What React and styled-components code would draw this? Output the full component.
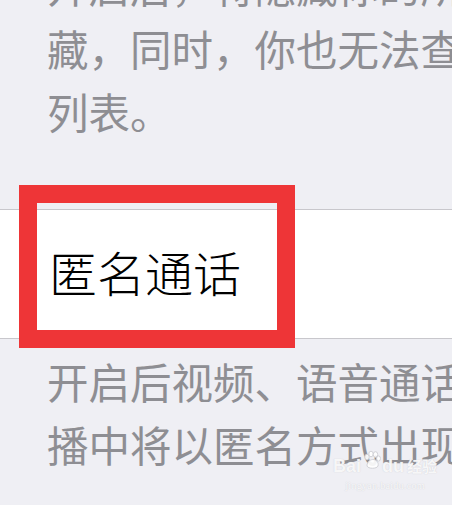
import React from 'react'
import styled, { createGlobalStyle } from 'styled-components'

const GlobalStyle = createGlobalStyle`
  html, body {
    margin: 0;
    padding: 0;
    background: #efeff4;
  }
  body {
    font-family: "Noto Sans CJK SC", "Noto Sans", sans-serif;
  }
`

const Page = styled.div`
  position: relative;
  width: 452px;
  height: 505px;
  overflow: hidden;
  background: #efeff4;
`

const Note = styled.div`
  margin-top: ${(p) => p.$top || 0}px;
  padding-left: 47px;
  color: #8e8e93;
  font-size: 41.5px;
  line-height: 63px;
`

const Line = styled.div`
  white-space: nowrap;
  overflow: hidden;
`

const Row = styled.div`
  margin-top: ${(p) => p.$top}px;
  height: 130px;
  box-sizing: border-box;
  padding: 0 0 6px 49px;
  display: flex;
  align-items: center;
  background: #fff;
  border-top: 1px solid #c8c7cc;
  border-bottom: 1px solid #c8c7cc;
  color: #000;
  font-size: 48px;
  font-weight: 300;
`

const Highlight = styled.div`
  position: absolute;
  left: 19px;
  top: 185px;
  width: 240px;
  height: 127px;
  border: 18px solid #ee3537;
`

const Watermark = styled.div`
  position: absolute;
  left: 333px;
  top: 456px;
  display: flex;
  flex-direction: column;
  align-items: center;
  color: rgba(255, 255, 255, 0.85);
  font-family: "Liberation Sans", sans-serif;
  text-shadow: 0 0 1px rgba(190, 190, 196, 0.8);
`

const Brand = styled.div`
  display: flex;
  align-items: center;
  font-size: 18px;
  font-weight: bold;
  line-height: 20px;
`

const Cn = styled.span`
  margin-left: 3px;
  font-family: "Noto Sans CJK SC", sans-serif;
  font-size: 15px;
  font-weight: bold;
`

const Url = styled.div`
  margin-top: 5px;
  font-family: "Liberation Serif", serif;
  font-size: 10px;
  line-height: 10px;
  letter-spacing: 0.3px;
`

function Paw() {
  return (
    <svg width="20" height="20" viewBox="0 0 20 20" style={{ margin: '-12px 0 0 1px' }}>
      <g fill="rgba(255,255,255,0.9)" stroke="#d2d2d7" strokeWidth="1">
        <ellipse cx="5" cy="7" rx="2.2" ry="2.8" />
        <ellipse cx="9" cy="4" rx="2.2" ry="2.8" />
        <ellipse cx="13.5" cy="4.5" rx="2.2" ry="2.8" />
        <ellipse cx="16.5" cy="8.5" rx="2" ry="2.6" />
        <path d="M5 16 C5 11 9 9.5 11 9.5 C14 9.5 17 12 16 16 C15 19 6 19 5 16 Z" />
      </g>
    </svg>
  )
}

export default function App() {
  return (
    <Page>
      <GlobalStyle />
      <Note $top={-46}>
        <Line>开启后，将隐藏你的所有会话</Line>
        <Line>藏，同时，你也无法查看</Line>
        <Line>列表。</Line>
      </Note>
      <Row $top={66}>匿名通话</Row>
      <Note $top={11}>
        <Line>开启后视频、语音通话和直</Line>
        <Line>播中将以匿名方式出现</Line>
      </Note>
      <Highlight />
      <Watermark>
        <Brand>
          Bai
          <Paw />
          du
          <Cn>经验</Cn>
        </Brand>
        <Url>jingyan.baidu.com</Url>
      </Watermark>
    </Page>
  )
}
